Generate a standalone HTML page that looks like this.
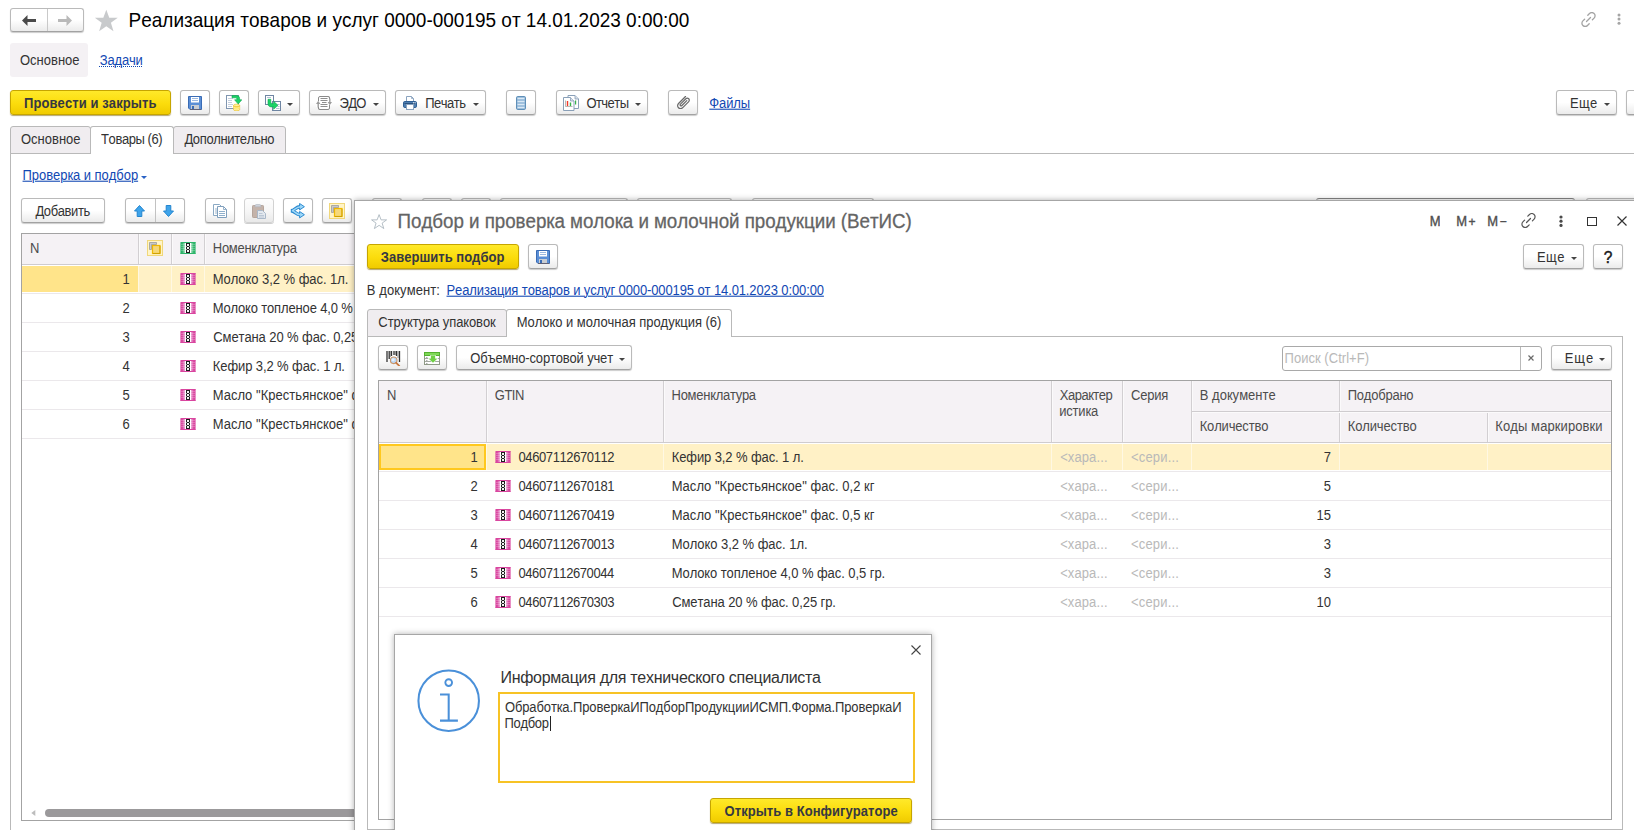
<!DOCTYPE html><html lang="ru"><head><meta charset="utf-8"><title>1C</title><style>

*{box-sizing:border-box;margin:0;padding:0}
html,body{width:1634px;height:830px;overflow:hidden;background:#fff}
body{font-family:"Liberation Sans",sans-serif;font-size:13px;color:#333;line-height:16px}
#root{position:relative;width:1634px;height:830px;overflow:hidden;background:#fff}
#root div,#root svg{position:absolute}
.t{white-space:nowrap;line-height:16px;height:16px;font-kerning:none;transform:scaleY(1.07);transform-origin:0 20%}
.btn{border:1px solid #bababa;border-bottom-color:#a2a2a2;border-radius:3px;background:linear-gradient(#fff 0%,#fff 50%,#ebebeb 100%);box-shadow:0 1px 1px rgba(0,0,0,0.2)}
.btn.dis{background:linear-gradient(#fdfdfd 0%,#f6f6f6 55%,#e9e9e9 100%);border-color:#d2d2d2;box-shadow:0 1px 0 #cfcfcf}
.ybtn{border:1px solid #c6a500;border-radius:3px;background:linear-gradient(#ffe92a 0%,#fbdc0c 55%,#f0cb00 100%);box-shadow:0 1px 1px rgba(120,95,0,0.55)}
.b{font-weight:bold}
.lnk{color:#1248b3;text-decoration:underline;text-underline-offset:1px;text-decoration-thickness:1px}
.hdr{background:#f5f2f5}
.hl{background:#cfcccf}
.vl{background:#d2cfd2}
.gray{color:#b9b9b9}
.r{text-align:right}

</style></head><body><div id="root">
<div class="btn" style="left:10px;top:8px;width:74px;height:24px;"><div style="left:36px;top:0;width:1px;height:22px;background:#c9c9c9"></div></div>
<svg style="left:22px;top:15px" width="14" height="11" viewBox="0 0 14 11" ><path d="M0 5.5L5.5 0v4h8.5v3H5.5v4z" fill="#4a4a4a"/></svg>
<svg style="left:58px;top:15px" width="14" height="11" viewBox="0 0 14 11" ><path d="M14 5.5L8.5 0v4H0v3h8.5v4z" fill="#b9b9b9"/></svg>
<svg style="left:94.2px;top:8.5px" width="24.6" height="23" viewBox="0 0 24 23" preserveAspectRatio="none"><path d="M12 0.8l2.900 8h8.300l-6.700 5 2.500 8.400L12 17.200 5 22.200l2.500-8.400-6.700-5h8.300z" fill="#c8cacc"/></svg>
<div class="t" style="left:128.54px;top:9px;letter-spacing:-0.011px;font-size:19px;line-height:22px;height:22px;color:#000">Реализация товаров и услуг 0000-000195 от 14.01.2023 0:00:00</div>
<svg style="left:1581px;top:12px" width="15" height="15" viewBox="0 0 15 15" >
<g fill="none" stroke="#a3a3a3" stroke-width="1.3" stroke-linecap="round">
<path d="M6.800 3.200l1.700-1.700a3.200 3.200 0 0 1 4.600 0a3.200 3.200 0 0 1 0 4.600l-1.700 1.700"/>
<path d="M8.200 11.800l-1.700 1.700a3.200 3.200 0 0 1-4.600 0a3.200 3.200 0 0 1 0-4.600l1.700-1.700"/>
<path d="M5.500 9.500l4-4"/>
</g></svg>
<svg style="left:1616.5px;top:13.4px" width="4" height="12" viewBox="0 0 4 12" ><circle cx="2" cy="2.0" r="1.5" fill="#a5a5a5"/><circle cx="2" cy="6.1" r="1.5" fill="#a5a5a5"/><circle cx="2" cy="10.2" r="1.5" fill="#a5a5a5"/></svg>
<div class="" style="left:10px;top:43px;width:78px;height:34px;background:#f4f1f4;border-radius:3px"></div>
<div class="t" style="left:20px;top:52px;">Основное</div>
<div class="t" style="left:99.77px;top:52px;letter-spacing:-0.181px;color:#1248b3">Задачи</div>
<div class="" style="left:99px;top:66px;width:43px;height:1px;border-top:1px dotted #1248b3"></div>
<div class="ybtn" style="left:10px;top:90px;width:161px;height:25px;"></div>
<div class="t b" style="left:24.03px;top:95px;letter-spacing:0.092px;color:#363841">Провести и закрыть</div>
<div class="btn" style="left:180px;top:90px;width:30px;height:25px;"></div>
<svg style="left:188px;top:96px" width="14" height="14" viewBox="0 0 14 14" >
<path d="M0.5 0.5h13v13H2L0.5 12z" fill="#5b8fd6" stroke="#3a6cb5"/>
<rect x="3" y="1" width="8" height="5.5" fill="#fff"/>
<path d="M4 2.5h6M4 4.5h6" stroke="#9db9e0" stroke-width="1"/>
<rect x="3" y="9" width="8" height="4" fill="#c9cdd2"/>
<rect x="4" y="10" width="2" height="3" fill="#3a6cb5"/>
<path d="M2 13.5h11" stroke="#7a5a4a" stroke-width="0.6"/></svg>
<div class="btn" style="left:219px;top:90px;width:30px;height:25px;"></div>
<svg style="left:226px;top:95px" width="16" height="16" viewBox="0 0 16 16" >
<rect x="0.5" y="0.5" width="12" height="13" fill="#fff" stroke="#7f95b0"/>
<path d="M2 3.5h5M2 5.5h4M2 7.5h4M2 9.5h5M2 11.5h4" stroke="#b4c2d4" stroke-width="0.8"/>
<path d="M6 0.6h4.6c2 0 3 1.2 3 3v1.2h2.2L12.2 9 8.6 4.8h2.2v-1c0-.7-.3-1-1-1H6z" fill="#1bd366" stroke="#0ca54d" stroke-width="0.6"/>
<path d="M7.5 10.3v4.2c0 .8 1.400 1.300 3.100 1.300s3.100-.5 3.100-1.300v-4.200" fill="#ffdf50" stroke="#e0b21a" stroke-width="0.500"/>
<ellipse cx="10.6" cy="10.3" rx="3.100" ry="1.200" fill="#fff0a0" stroke="#e0b21a" stroke-width="0.500"/>
<path d="M7.700 12.100c0 .7 1.300 1.100 2.900 1.100s2.900-.4 2.900-1.100M7.700 13.700c0 .7 1.300 1.100 2.900 1.100s2.900-.4 2.900-1.100" fill="none" stroke="#fff8cc" stroke-width="0.700"/></svg>
<div class="btn" style="left:258px;top:90px;width:42px;height:25px;"></div>
<svg style="left:265px;top:95px" width="16" height="16" viewBox="0 0 16 16" >
<rect x="0.5" y="0.5" width="8" height="9" fill="#fff" stroke="#6f86a3"/>
<path d="M2 2.5h4" stroke="#9fb2c8" stroke-width="0.8"/>
<rect x="7.5" y="6.5" width="8" height="9" fill="#fff" stroke="#6f86a3"/>
<path d="M12.5 9.500h2M12.500 11.500h2M11 13.500h3.500" stroke="#9fb2c8" stroke-width="0.8"/>
<path d="M3 4.300h2.800v3c0 .9.500 1.300 1.300 1.300h1.500V6.300l4.400 4-4.400 4v-2.400H6.400c-2.200 0-3.400-1.300-3.400-3.400z" fill="#1bd366" stroke="#0ca54d" stroke-width="0.600"/></svg>
<svg style="left:287px;top:103px" width="6" height="3" viewBox="0 0 6 3" ><path d="M0 0h6L3 3z" fill="#444"/></svg>
<div class="btn" style="left:309px;top:90px;width:77px;height:25px;"></div>
<svg style="left:316px;top:96px" width="16" height="14" viewBox="0 0 16 14" >
<rect x="2.5" y="0.5" width="11" height="13" rx="1.5" fill="#fff" stroke="#8a8a8a"/>
<path d="M4.500 2.500h7M4.500 4.500h7M6 6.500h4.500M4.500 8.500h7M4.500 10.500h7" stroke="#8f8f8f" stroke-width="1"/>
<rect x="0" y="5" width="4" height="6" fill="#fff"/><rect x="12" y="3" width="4" height="6" fill="#fff"/>
<path d="M2.200 4.800L0 8h1.500v3.500h1.400V8h1.500z" fill="#9c9c9c"/>
<path d="M13.800 9.200L11.600 6h1.500V2.500h1.400V6h1.500z" fill="#9c9c9c"/>
<path d="M2.500 11.500v1c0 .6.400 1 1 1M13.500 2.500v-1c0-.6-.4-1-1-1" fill="none" stroke="#8a8a8a"/></svg>
<div class="t" style="left:339.53px;top:95px;letter-spacing:-0.686px;">ЭДО</div>
<svg style="left:373px;top:103px" width="6" height="3" viewBox="0 0 6 3" ><path d="M0 0h6L3 3z" fill="#444"/></svg>
<div class="btn" style="left:395px;top:90px;width:91px;height:25px;"></div>
<svg style="left:403px;top:96px" width="14" height="14" viewBox="0 0 14 14" >
<path d="M3.5 5V0.5h5l2 2V5" fill="#fff" stroke="#8aa3bf"/>
<path d="M8.5 0.5v2h2" fill="none" stroke="#8aa3bf" stroke-width="0.8"/>
<rect x="0.5" y="5.5" width="13" height="6" rx="1.3" fill="#4f7fb0" stroke="#2f5f94"/>
<path d="M1.5 7.5h11" stroke="#2b527f" stroke-width="1"/>
<rect x="10" y="6.3" width="1" height="1" fill="#fff"/><rect x="11.6" y="6.3" width="1" height="1" fill="#fff"/>
<rect x="3.5" y="8.5" width="7" height="5" fill="#fff" stroke="#8aa3bf"/></svg>
<div class="t" style="left:425.15px;top:95px;letter-spacing:-0.463px;">Печать</div>
<svg style="left:473px;top:103px" width="6" height="3" viewBox="0 0 6 3" ><path d="M0 0h6L3 3z" fill="#444"/></svg>
<div class="btn" style="left:506px;top:90px;width:30px;height:25px;"></div>
<svg style="left:516px;top:96px" width="10" height="14" viewBox="0 0 10 14" >
<rect x="0.5" y="0.5" width="9" height="13" rx="1.2" fill="#8db4d6" stroke="#5f8fb8"/>
<path d="M1.5 2.5h7M1.5 5.5h7M1.5 8.5h7M1.5 11.5h7" stroke="#d9e8f5" stroke-width="1.4"/></svg>
<div class="btn" style="left:556px;top:90px;width:92px;height:25px;"></div>
<svg style="left:563px;top:95px" width="16" height="16" viewBox="0 0 16 16" >
<path d="M5 0.5h7l3.5 3.5v9.5H5z" fill="#fff" stroke="#8aa0b8"/>
<path d="M12 0.5V4h3.5" fill="#d7dfe8" stroke="#8aa0b8" stroke-width="0.8"/>
<rect x="12" y="5.5" width="1.2" height="4" fill="#37b34a"/>
<path d="M0.5 2.5h7l3.5 3.500v9.500H0.500z" fill="#fff" stroke="#8aa0b8"/>
<path d="M7.500 2.500V6h3.500" fill="#d7dfe8" stroke="#8aa0b8" stroke-width="0.8"/>
<path d="M2.500 5.500v6h7" fill="none" stroke="#9a9a9a" stroke-width="0.7"/>
<rect x="3.8" y="6" width="1.400" height="5" fill="#f03a2a"/>
<rect x="6.800" y="7.500" width="1.400" height="3.500" fill="#37b34a"/></svg>
<div class="t" style="left:586.38px;top:95px;letter-spacing:-0.55px;">Отчеты</div>
<svg style="left:635px;top:103px" width="6" height="3" viewBox="0 0 6 3" ><path d="M0 0h6L3 3z" fill="#444"/></svg>
<div class="btn" style="left:668px;top:90px;width:30px;height:25px;"></div>
<svg style="left:677px;top:96px" width="13" height="13" viewBox="0 0 13 13" >
<g fill="none" stroke="#6a6a6a" stroke-width="1.25" stroke-linecap="round">
<path d="M8.500 0.500L1.800 7.200c-1.500 1.500-1.500 3.300-.3 4.500s3 1.200 4.500-.3l5.500-5.500c1-1 1-2.300.2-3.100s-2.100-.8-3.100.2L3.500 8.100c-.5.500-.5 1.100-.1 1.500s1 .4 1.500-.1l4.900-4.900"/>
</g></svg>
<div class="t lnk" style="left:709.25px;top:95px;letter-spacing:-0.088px;">Файлы</div>
<div class="btn" style="left:1556px;top:90px;width:61px;height:25px;"></div>
<div class="t" style="left:1570.03px;top:95px;letter-spacing:0.274px;">Еще</div>
<svg style="left:1604px;top:103px" width="6" height="3" viewBox="0 0 6 3" ><path d="M0 0h6L3 3z" fill="#444"/></svg>
<div class="btn" style="left:1626px;top:90px;width:30px;height:25px;"></div>
<div class="" style="left:10px;top:153px;width:1640px;height:700px;border:1px solid #b9b9b9;background:#fff"></div>
<div class="" style="left:10px;top:126px;width:81px;height:28px;border:1px solid #b9b9b9;border-bottom:1px solid #b9b9b9;border-radius:3px 3px 0 0;background:#f0edf0"></div>
<div class="" style="left:173px;top:126px;width:113px;height:28px;border:1px solid #b9b9b9;border-radius:3px 3px 0 0;background:#f0edf0"></div>
<div class="" style="left:90px;top:126px;width:84px;height:28px;border:1px solid #b9b9b9;border-bottom:none;border-radius:3px 3px 0 0;background:#fff"></div>
<div class="t" style="left:21px;top:131px;">Основное</div>
<div class="t" style="left:101.11px;top:131px;letter-spacing:-0.431px;">Товары (6)</div>
<div class="t" style="left:184.4px;top:131px;letter-spacing:-0.353px;">Дополнительно</div>
<div class="t lnk" style="left:22.55px;top:167px;letter-spacing:-0.046px;">Проверка и подбор</div>
<svg style="left:141.3px;top:176px" width="6" height="3" viewBox="0 0 6 3" ><path d="M0 0h6L3 3z" fill="#2a62c5"/></svg>
<div class="btn" style="left:21px;top:198px;width:84px;height:25px;"></div>
<div class="t" style="left:35.4px;top:203px;letter-spacing:-0.382px;">Добавить</div>
<div class="btn" style="left:125px;top:198px;width:60px;height:25px;"><div style="left:29px;top:0;width:1px;height:23px;background:#c2c2c2"></div></div>
<svg style="left:134px;top:205px" width="11" height="12" viewBox="0 0 11 12" ><path d="M5.500 0.500L10.500 6H7.800v5.500H3.200V6H0.500z" fill="#3fa4ea" stroke="#2385cf" stroke-width="1" stroke-linejoin="round"/></svg>
<svg style="left:163px;top:205px" width="11" height="12" viewBox="0 0 11 12" ><path d="M5.500 11.500L10.500 6H7.800V0.500H3.200V6H0.500z" fill="#3fa4ea" stroke="#2385cf" stroke-width="1" stroke-linejoin="round"/></svg>
<div class="btn" style="left:205px;top:198px;width:30px;height:25px;"></div>
<svg style="left:213px;top:204px" width="14" height="14" viewBox="0 0 14 14" >
<path d="M0.500 0.500h6l2 2v9H0.500z" fill="#fff" stroke="#8aa9c4"/>
<path d="M2 5h2M2 7h2M2 9h2" stroke="#9fb7cc"/>
<path d="M4.500 2.500h6l3 3v8h-9z" fill="#fff" stroke="#7f9fbd"/>
<path d="M10.500 2.500v3h3" fill="none" stroke="#7f9fbd" stroke-width="0.8"/>
<path d="M6 7.500h6M6 9.500h6M6 11.500h6" stroke="#8fb0cc" stroke-width="1"/></svg>
<div class="btn dis" style="left:244px;top:198px;width:30px;height:25px;"></div>
<svg style="left:252px;top:204px" width="14" height="15" viewBox="0 0 14 15" >
<rect x="0.500" y="1.500" width="11" height="12" rx="0.800" fill="#c4b3aa" stroke="#b5a59c"/>
<path d="M3 1.800c0-1 1-1.500 3-1.500s3 .5 3 1.500v1H3z" fill="#cfd3da" stroke="#aeb4bd" stroke-width="0.600"/>
<path d="M5.500 6.500h5l3 3v5h-8z" fill="#e3e8ee" stroke="#a9b8c9"/>
<path d="M7 9.500h3.500M7 11.500h5M7 13h5" stroke="#b7c4d3" stroke-width="0.900"/></svg>
<div class="btn" style="left:283px;top:198px;width:30px;height:25px;"></div>
<svg style="left:290px;top:203px" width="15" height="16" viewBox="0 0 15 16" >
<path d="M10 3.700C5.500 3.700 5 7.700 0.800 7.700C5 7.700 5.500 11.700 10 11.700" fill="none" stroke="#2b8ad0" stroke-width="3.400" stroke-linejoin="miter"/>
<path d="M9.600 0.500l4.800 3.200-4.800 3.200zM9.600 8.500l4.800 3.200-4.800 3.200z" fill="#9fd8f8" stroke="#2b8ad0" stroke-width="1" stroke-linejoin="miter"/>
<path d="M10.500 3.700C5.500 3.700 5 7.700 1.800 7.700C5 7.700 5.500 11.700 10.500 11.700" fill="none" stroke="#9fd8f8" stroke-width="1.500"/></svg>
<div class="btn" style="left:322px;top:198px;width:30px;height:25px;"></div>
<svg style="left:329px;top:203px" width="16" height="16" viewBox="0 0 16 16" >
<rect x="0.500" y="0.500" width="15" height="15" fill="#fff4c8" stroke="#f0d77a"/>
<path d="M2.500 2.500h7v2h-5v5h-2z" fill="#c9c9c9" stroke="#9a9a9a" stroke-width="0.800"/>
<rect x="5.500" y="5.500" width="7.500" height="8" fill="#f6d878" stroke="#f0b800" stroke-width="1.200"/>
<path d="M13 6v7.500H6" fill="none" stroke="#c89a00" stroke-width="0.800"/></svg>
<div class="btn" style="left:372px;top:198px;width:30px;height:25px;"></div>
<div class="btn" style="left:422px;top:198px;width:30px;height:25px;"></div>
<div class="btn" style="left:461px;top:198px;width:30px;height:25px;"></div>
<div class="btn" style="left:500px;top:198px;width:128px;height:25px;"></div>
<div class="btn" style="left:637px;top:198px;width:95px;height:25px;"></div>
<div class="btn" style="left:752px;top:198px;width:122px;height:25px;"></div>
<div class="" style="left:1316px;top:198px;width:259px;height:25px;border:1px solid #a9a9a9;border-top-color:#858585;border-radius:3px;background:#fff"></div>
<div class="btn" style="left:1586px;top:198px;width:61px;height:25px;"></div>
<div class="" style="left:21px;top:233px;width:1620px;height:588px;border:1px solid #a3a3a3;background:#fff"></div>
<div class="hdr" style="left:22px;top:234px;width:1600px;height:30px;"></div>
<div class="hl" style="left:22px;top:264px;width:1600px;height:1px;"></div>
<div class="vl" style="left:138px;top:234px;width:1px;height:30px;"></div>
<div class="" style="left:139px;top:234px;width:1px;height:30px;background:#fbfafb"></div>
<div class="vl" style="left:171px;top:234px;width:1px;height:30px;"></div>
<div class="" style="left:172px;top:234px;width:1px;height:30px;background:#fbfafb"></div>
<div class="vl" style="left:204px;top:234px;width:1px;height:30px;"></div>
<div class="" style="left:205px;top:234px;width:1px;height:30px;background:#fbfafb"></div>
<div class="t" style="left:30px;top:240px;color:#4d4d4d">N</div>
<svg style="left:147px;top:240px" width="16" height="16" viewBox="0 0 16 16" >
<rect x="0.500" y="0.500" width="15" height="15" fill="#fff4c8" stroke="#f0d77a"/>
<path d="M2.500 2.500h7v2h-5v5h-2z" fill="#c9c9c9" stroke="#9a9a9a" stroke-width="0.800"/>
<rect x="5.500" y="5.500" width="7.500" height="8" fill="#f6d878" stroke="#f0b800" stroke-width="1.200"/>
<path d="M13 6v7.500H6" fill="none" stroke="#c89a00" stroke-width="0.800"/></svg>
<svg style="left:180px;top:242px" width="16" height="12" viewBox="0 0 16 12" >
<defs><linearGradient id="sg1" x1="0" x2="1" y1="0" y2="0"><stop offset="0" stop-color="#2db46a"/><stop offset="0.14" stop-color="#2db46a"/><stop offset="0.31" stop-color="#a9e2c2"/><stop offset="0.69" stop-color="#a9e2c2"/><stop offset="0.86" stop-color="#2db46a"/><stop offset="1" stop-color="#2db46a"/></linearGradient></defs>
<path d="M0.8 0L0.8 1L0 2L0.8 3L0 4L0.8 5L0 6L0.8 7L0 8L0.8 9L0 10L0.8 11L0 12L16 12L15.2 11L16 10L15.2 9L16 8L15.2 7L16 6L15.2 5L16 4L15.2 3L16 2L15.2 1L16 0z" fill="url(#sg1)"/>
<rect x="0.6" y="0" width="14.8" height="1" fill="#2db46a"/><rect x="0.6" y="11" width="14.8" height="1" fill="#2db46a"/>
<rect x="1" y="2" width="4" height="1" fill="#fff" opacity="0.22"/><rect x="11" y="2" width="4" height="1" fill="#fff" opacity="0.22"/><rect x="1" y="4" width="4" height="1" fill="#fff" opacity="0.22"/><rect x="11" y="4" width="4" height="1" fill="#fff" opacity="0.22"/><rect x="1" y="6" width="4" height="1" fill="#fff" opacity="0.22"/><rect x="11" y="6" width="4" height="1" fill="#fff" opacity="0.22"/><rect x="1" y="8" width="4" height="1" fill="#fff" opacity="0.22"/><rect x="11" y="8" width="4" height="1" fill="#fff" opacity="0.22"/><rect x="5" y="1" width="6" height="10" fill="#fff"/>
<rect x="6" y="1" width="4" height="10" fill="#1d1d1d"/><rect x="7" y="2" width="1" height="1" fill="#fff" opacity="0.95"/><rect x="8" y="2" width="1" height="1" fill="#fff" opacity="0.95"/><rect x="7" y="3" width="1" height="1" fill="#fff" opacity="0.95"/><rect x="8" y="3" width="1" height="1" fill="#fff" opacity="0.95"/><rect x="6" y="4" width="1" height="1" fill="#fff" opacity="0.55"/><rect x="9" y="4" width="1" height="1" fill="#fff" opacity="0.55"/><rect x="7" y="5" width="1" height="1" fill="#fff" opacity="0.95"/><rect x="8" y="5" width="1" height="1" fill="#fff" opacity="0.95"/><rect x="7" y="6" width="1" height="1" fill="#fff" opacity="0.95"/><rect x="8" y="6" width="1" height="1" fill="#fff" opacity="0.95"/><rect x="6" y="7" width="1" height="1" fill="#fff" opacity="0.55"/><rect x="9" y="7" width="1" height="1" fill="#fff" opacity="0.55"/><rect x="7" y="8" width="1" height="1" fill="#fff" opacity="0.95"/><rect x="8" y="8" width="1" height="1" fill="#fff" opacity="0.95"/><rect x="7" y="9" width="1" height="1" fill="#fff" opacity="0.95"/><rect x="8" y="9" width="1" height="1" fill="#fff" opacity="0.95"/></svg>
<div class="t" style="left:212.83px;top:240px;letter-spacing:-0.301px;color:#4d4d4d">Номенклатура</div>
<div class="" style="left:22px;top:266px;width:1600px;height:26px;background:#fff1c6"></div>
<div class="" style="left:22px;top:266px;width:116px;height:26px;background:#ffe48a"></div>
<div class="" style="left:138px;top:266px;width:1px;height:26px;background:#fff8e3"></div>
<div class="" style="left:171px;top:266px;width:1px;height:26px;background:#fff8e3"></div>
<div class="" style="left:204px;top:266px;width:1px;height:26px;background:#fff8e3"></div>
<div class="" style="left:22px;top:293px;width:1600px;height:1px;background:#ebe8eb"></div>
<div class="t r" style="left:99.7px;top:271px;width:30px">1</div>
<svg style="left:180px;top:273px" width="16" height="12" viewBox="0 0 16 12" >
<defs><linearGradient id="sg2" x1="0" x2="1" y1="0" y2="0"><stop offset="0" stop-color="#d9469f"/><stop offset="0.14" stop-color="#d9469f"/><stop offset="0.31" stop-color="#eda6d6"/><stop offset="0.69" stop-color="#eda6d6"/><stop offset="0.86" stop-color="#d9469f"/><stop offset="1" stop-color="#d9469f"/></linearGradient></defs>
<path d="M0.8 0L0.8 1L0 2L0.8 3L0 4L0.8 5L0 6L0.8 7L0 8L0.8 9L0 10L0.8 11L0 12L16 12L15.2 11L16 10L15.2 9L16 8L15.2 7L16 6L15.2 5L16 4L15.2 3L16 2L15.2 1L16 0z" fill="url(#sg2)"/>
<rect x="0.6" y="0" width="14.8" height="1" fill="#d9469f"/><rect x="0.6" y="11" width="14.8" height="1" fill="#d9469f"/>
<rect x="1" y="2" width="4" height="1" fill="#fff" opacity="0.22"/><rect x="11" y="2" width="4" height="1" fill="#fff" opacity="0.22"/><rect x="1" y="4" width="4" height="1" fill="#fff" opacity="0.22"/><rect x="11" y="4" width="4" height="1" fill="#fff" opacity="0.22"/><rect x="1" y="6" width="4" height="1" fill="#fff" opacity="0.22"/><rect x="11" y="6" width="4" height="1" fill="#fff" opacity="0.22"/><rect x="1" y="8" width="4" height="1" fill="#fff" opacity="0.22"/><rect x="11" y="8" width="4" height="1" fill="#fff" opacity="0.22"/><rect x="5" y="1" width="6" height="10" fill="#fff"/>
<rect x="6" y="1" width="4" height="10" fill="#1d1d1d"/><rect x="7" y="2" width="1" height="1" fill="#fff" opacity="0.95"/><rect x="8" y="2" width="1" height="1" fill="#fff" opacity="0.95"/><rect x="7" y="3" width="1" height="1" fill="#fff" opacity="0.95"/><rect x="8" y="3" width="1" height="1" fill="#fff" opacity="0.95"/><rect x="6" y="4" width="1" height="1" fill="#fff" opacity="0.55"/><rect x="9" y="4" width="1" height="1" fill="#fff" opacity="0.55"/><rect x="7" y="5" width="1" height="1" fill="#fff" opacity="0.95"/><rect x="8" y="5" width="1" height="1" fill="#fff" opacity="0.95"/><rect x="7" y="6" width="1" height="1" fill="#fff" opacity="0.95"/><rect x="8" y="6" width="1" height="1" fill="#fff" opacity="0.95"/><rect x="6" y="7" width="1" height="1" fill="#fff" opacity="0.55"/><rect x="9" y="7" width="1" height="1" fill="#fff" opacity="0.55"/><rect x="7" y="8" width="1" height="1" fill="#fff" opacity="0.95"/><rect x="8" y="8" width="1" height="1" fill="#fff" opacity="0.95"/><rect x="7" y="9" width="1" height="1" fill="#fff" opacity="0.95"/><rect x="8" y="9" width="1" height="1" fill="#fff" opacity="0.95"/></svg>
<div class="t" style="left:212.83px;top:271px;letter-spacing:-0.034px;">Молоко 3,2 % фас. 1л.</div>
<div class="" style="left:22px;top:322px;width:1600px;height:1px;background:#ebe8eb"></div>
<div class="t r" style="left:99.7px;top:300px;width:30px">2</div>
<svg style="left:180px;top:302px" width="16" height="12" viewBox="0 0 16 12" >
<defs><linearGradient id="sg3" x1="0" x2="1" y1="0" y2="0"><stop offset="0" stop-color="#d9469f"/><stop offset="0.14" stop-color="#d9469f"/><stop offset="0.31" stop-color="#eda6d6"/><stop offset="0.69" stop-color="#eda6d6"/><stop offset="0.86" stop-color="#d9469f"/><stop offset="1" stop-color="#d9469f"/></linearGradient></defs>
<path d="M0.8 0L0.8 1L0 2L0.8 3L0 4L0.8 5L0 6L0.8 7L0 8L0.8 9L0 10L0.8 11L0 12L16 12L15.2 11L16 10L15.2 9L16 8L15.2 7L16 6L15.2 5L16 4L15.2 3L16 2L15.2 1L16 0z" fill="url(#sg3)"/>
<rect x="0.6" y="0" width="14.8" height="1" fill="#d9469f"/><rect x="0.6" y="11" width="14.8" height="1" fill="#d9469f"/>
<rect x="1" y="2" width="4" height="1" fill="#fff" opacity="0.22"/><rect x="11" y="2" width="4" height="1" fill="#fff" opacity="0.22"/><rect x="1" y="4" width="4" height="1" fill="#fff" opacity="0.22"/><rect x="11" y="4" width="4" height="1" fill="#fff" opacity="0.22"/><rect x="1" y="6" width="4" height="1" fill="#fff" opacity="0.22"/><rect x="11" y="6" width="4" height="1" fill="#fff" opacity="0.22"/><rect x="1" y="8" width="4" height="1" fill="#fff" opacity="0.22"/><rect x="11" y="8" width="4" height="1" fill="#fff" opacity="0.22"/><rect x="5" y="1" width="6" height="10" fill="#fff"/>
<rect x="6" y="1" width="4" height="10" fill="#1d1d1d"/><rect x="7" y="2" width="1" height="1" fill="#fff" opacity="0.95"/><rect x="8" y="2" width="1" height="1" fill="#fff" opacity="0.95"/><rect x="7" y="3" width="1" height="1" fill="#fff" opacity="0.95"/><rect x="8" y="3" width="1" height="1" fill="#fff" opacity="0.95"/><rect x="6" y="4" width="1" height="1" fill="#fff" opacity="0.55"/><rect x="9" y="4" width="1" height="1" fill="#fff" opacity="0.55"/><rect x="7" y="5" width="1" height="1" fill="#fff" opacity="0.95"/><rect x="8" y="5" width="1" height="1" fill="#fff" opacity="0.95"/><rect x="7" y="6" width="1" height="1" fill="#fff" opacity="0.95"/><rect x="8" y="6" width="1" height="1" fill="#fff" opacity="0.95"/><rect x="6" y="7" width="1" height="1" fill="#fff" opacity="0.55"/><rect x="9" y="7" width="1" height="1" fill="#fff" opacity="0.55"/><rect x="7" y="8" width="1" height="1" fill="#fff" opacity="0.95"/><rect x="8" y="8" width="1" height="1" fill="#fff" opacity="0.95"/><rect x="7" y="9" width="1" height="1" fill="#fff" opacity="0.95"/><rect x="8" y="9" width="1" height="1" fill="#fff" opacity="0.95"/></svg>
<div class="t" style="left:212.83px;top:300px;letter-spacing:-0.145px;">Молоко топленое 4,0 % фас. 0,5 гр.</div>
<div class="" style="left:22px;top:351px;width:1600px;height:1px;background:#ebe8eb"></div>
<div class="t r" style="left:99.7px;top:329px;width:30px">3</div>
<svg style="left:180px;top:331px" width="16" height="12" viewBox="0 0 16 12" >
<defs><linearGradient id="sg4" x1="0" x2="1" y1="0" y2="0"><stop offset="0" stop-color="#d9469f"/><stop offset="0.14" stop-color="#d9469f"/><stop offset="0.31" stop-color="#eda6d6"/><stop offset="0.69" stop-color="#eda6d6"/><stop offset="0.86" stop-color="#d9469f"/><stop offset="1" stop-color="#d9469f"/></linearGradient></defs>
<path d="M0.8 0L0.8 1L0 2L0.8 3L0 4L0.8 5L0 6L0.8 7L0 8L0.8 9L0 10L0.8 11L0 12L16 12L15.2 11L16 10L15.2 9L16 8L15.2 7L16 6L15.2 5L16 4L15.2 3L16 2L15.2 1L16 0z" fill="url(#sg4)"/>
<rect x="0.6" y="0" width="14.8" height="1" fill="#d9469f"/><rect x="0.6" y="11" width="14.8" height="1" fill="#d9469f"/>
<rect x="1" y="2" width="4" height="1" fill="#fff" opacity="0.22"/><rect x="11" y="2" width="4" height="1" fill="#fff" opacity="0.22"/><rect x="1" y="4" width="4" height="1" fill="#fff" opacity="0.22"/><rect x="11" y="4" width="4" height="1" fill="#fff" opacity="0.22"/><rect x="1" y="6" width="4" height="1" fill="#fff" opacity="0.22"/><rect x="11" y="6" width="4" height="1" fill="#fff" opacity="0.22"/><rect x="1" y="8" width="4" height="1" fill="#fff" opacity="0.22"/><rect x="11" y="8" width="4" height="1" fill="#fff" opacity="0.22"/><rect x="5" y="1" width="6" height="10" fill="#fff"/>
<rect x="6" y="1" width="4" height="10" fill="#1d1d1d"/><rect x="7" y="2" width="1" height="1" fill="#fff" opacity="0.95"/><rect x="8" y="2" width="1" height="1" fill="#fff" opacity="0.95"/><rect x="7" y="3" width="1" height="1" fill="#fff" opacity="0.95"/><rect x="8" y="3" width="1" height="1" fill="#fff" opacity="0.95"/><rect x="6" y="4" width="1" height="1" fill="#fff" opacity="0.55"/><rect x="9" y="4" width="1" height="1" fill="#fff" opacity="0.55"/><rect x="7" y="5" width="1" height="1" fill="#fff" opacity="0.95"/><rect x="8" y="5" width="1" height="1" fill="#fff" opacity="0.95"/><rect x="7" y="6" width="1" height="1" fill="#fff" opacity="0.95"/><rect x="8" y="6" width="1" height="1" fill="#fff" opacity="0.95"/><rect x="6" y="7" width="1" height="1" fill="#fff" opacity="0.55"/><rect x="9" y="7" width="1" height="1" fill="#fff" opacity="0.55"/><rect x="7" y="8" width="1" height="1" fill="#fff" opacity="0.95"/><rect x="8" y="8" width="1" height="1" fill="#fff" opacity="0.95"/><rect x="7" y="9" width="1" height="1" fill="#fff" opacity="0.95"/><rect x="8" y="9" width="1" height="1" fill="#fff" opacity="0.95"/></svg>
<div class="t" style="left:213.24px;top:329px;letter-spacing:-0.092px;">Сметана 20 % фас. 0,25 гр.</div>
<div class="" style="left:22px;top:380px;width:1600px;height:1px;background:#ebe8eb"></div>
<div class="t r" style="left:99.7px;top:358px;width:30px">4</div>
<svg style="left:180px;top:360px" width="16" height="12" viewBox="0 0 16 12" >
<defs><linearGradient id="sg5" x1="0" x2="1" y1="0" y2="0"><stop offset="0" stop-color="#d9469f"/><stop offset="0.14" stop-color="#d9469f"/><stop offset="0.31" stop-color="#eda6d6"/><stop offset="0.69" stop-color="#eda6d6"/><stop offset="0.86" stop-color="#d9469f"/><stop offset="1" stop-color="#d9469f"/></linearGradient></defs>
<path d="M0.8 0L0.8 1L0 2L0.8 3L0 4L0.8 5L0 6L0.8 7L0 8L0.8 9L0 10L0.8 11L0 12L16 12L15.2 11L16 10L15.2 9L16 8L15.2 7L16 6L15.2 5L16 4L15.2 3L16 2L15.2 1L16 0z" fill="url(#sg5)"/>
<rect x="0.6" y="0" width="14.8" height="1" fill="#d9469f"/><rect x="0.6" y="11" width="14.8" height="1" fill="#d9469f"/>
<rect x="1" y="2" width="4" height="1" fill="#fff" opacity="0.22"/><rect x="11" y="2" width="4" height="1" fill="#fff" opacity="0.22"/><rect x="1" y="4" width="4" height="1" fill="#fff" opacity="0.22"/><rect x="11" y="4" width="4" height="1" fill="#fff" opacity="0.22"/><rect x="1" y="6" width="4" height="1" fill="#fff" opacity="0.22"/><rect x="11" y="6" width="4" height="1" fill="#fff" opacity="0.22"/><rect x="1" y="8" width="4" height="1" fill="#fff" opacity="0.22"/><rect x="11" y="8" width="4" height="1" fill="#fff" opacity="0.22"/><rect x="5" y="1" width="6" height="10" fill="#fff"/>
<rect x="6" y="1" width="4" height="10" fill="#1d1d1d"/><rect x="7" y="2" width="1" height="1" fill="#fff" opacity="0.95"/><rect x="8" y="2" width="1" height="1" fill="#fff" opacity="0.95"/><rect x="7" y="3" width="1" height="1" fill="#fff" opacity="0.95"/><rect x="8" y="3" width="1" height="1" fill="#fff" opacity="0.95"/><rect x="6" y="4" width="1" height="1" fill="#fff" opacity="0.55"/><rect x="9" y="4" width="1" height="1" fill="#fff" opacity="0.55"/><rect x="7" y="5" width="1" height="1" fill="#fff" opacity="0.95"/><rect x="8" y="5" width="1" height="1" fill="#fff" opacity="0.95"/><rect x="7" y="6" width="1" height="1" fill="#fff" opacity="0.95"/><rect x="8" y="6" width="1" height="1" fill="#fff" opacity="0.95"/><rect x="6" y="7" width="1" height="1" fill="#fff" opacity="0.55"/><rect x="9" y="7" width="1" height="1" fill="#fff" opacity="0.55"/><rect x="7" y="8" width="1" height="1" fill="#fff" opacity="0.95"/><rect x="8" y="8" width="1" height="1" fill="#fff" opacity="0.95"/><rect x="7" y="9" width="1" height="1" fill="#fff" opacity="0.95"/><rect x="8" y="9" width="1" height="1" fill="#fff" opacity="0.95"/></svg>
<div class="t" style="left:212.83px;top:358px;letter-spacing:-0.1px;">Кефир 3,2 % фас. 1 л.</div>
<div class="" style="left:22px;top:409px;width:1600px;height:1px;background:#ebe8eb"></div>
<div class="t r" style="left:99.7px;top:387px;width:30px">5</div>
<svg style="left:180px;top:389px" width="16" height="12" viewBox="0 0 16 12" >
<defs><linearGradient id="sg6" x1="0" x2="1" y1="0" y2="0"><stop offset="0" stop-color="#d9469f"/><stop offset="0.14" stop-color="#d9469f"/><stop offset="0.31" stop-color="#eda6d6"/><stop offset="0.69" stop-color="#eda6d6"/><stop offset="0.86" stop-color="#d9469f"/><stop offset="1" stop-color="#d9469f"/></linearGradient></defs>
<path d="M0.8 0L0.8 1L0 2L0.8 3L0 4L0.8 5L0 6L0.8 7L0 8L0.8 9L0 10L0.8 11L0 12L16 12L15.2 11L16 10L15.2 9L16 8L15.2 7L16 6L15.2 5L16 4L15.2 3L16 2L15.2 1L16 0z" fill="url(#sg6)"/>
<rect x="0.6" y="0" width="14.8" height="1" fill="#d9469f"/><rect x="0.6" y="11" width="14.8" height="1" fill="#d9469f"/>
<rect x="1" y="2" width="4" height="1" fill="#fff" opacity="0.22"/><rect x="11" y="2" width="4" height="1" fill="#fff" opacity="0.22"/><rect x="1" y="4" width="4" height="1" fill="#fff" opacity="0.22"/><rect x="11" y="4" width="4" height="1" fill="#fff" opacity="0.22"/><rect x="1" y="6" width="4" height="1" fill="#fff" opacity="0.22"/><rect x="11" y="6" width="4" height="1" fill="#fff" opacity="0.22"/><rect x="1" y="8" width="4" height="1" fill="#fff" opacity="0.22"/><rect x="11" y="8" width="4" height="1" fill="#fff" opacity="0.22"/><rect x="5" y="1" width="6" height="10" fill="#fff"/>
<rect x="6" y="1" width="4" height="10" fill="#1d1d1d"/><rect x="7" y="2" width="1" height="1" fill="#fff" opacity="0.95"/><rect x="8" y="2" width="1" height="1" fill="#fff" opacity="0.95"/><rect x="7" y="3" width="1" height="1" fill="#fff" opacity="0.95"/><rect x="8" y="3" width="1" height="1" fill="#fff" opacity="0.95"/><rect x="6" y="4" width="1" height="1" fill="#fff" opacity="0.55"/><rect x="9" y="4" width="1" height="1" fill="#fff" opacity="0.55"/><rect x="7" y="5" width="1" height="1" fill="#fff" opacity="0.95"/><rect x="8" y="5" width="1" height="1" fill="#fff" opacity="0.95"/><rect x="7" y="6" width="1" height="1" fill="#fff" opacity="0.95"/><rect x="8" y="6" width="1" height="1" fill="#fff" opacity="0.95"/><rect x="6" y="7" width="1" height="1" fill="#fff" opacity="0.55"/><rect x="9" y="7" width="1" height="1" fill="#fff" opacity="0.55"/><rect x="7" y="8" width="1" height="1" fill="#fff" opacity="0.95"/><rect x="8" y="8" width="1" height="1" fill="#fff" opacity="0.95"/><rect x="7" y="9" width="1" height="1" fill="#fff" opacity="0.95"/><rect x="8" y="9" width="1" height="1" fill="#fff" opacity="0.95"/></svg>
<div class="t" style="left:212.83px;top:387px;letter-spacing:0.036px;">Масло "Крестьянское" фас. 0,2 кг</div>
<div class="" style="left:22px;top:438px;width:1600px;height:1px;background:#ebe8eb"></div>
<div class="t r" style="left:99.7px;top:416px;width:30px">6</div>
<svg style="left:180px;top:418px" width="16" height="12" viewBox="0 0 16 12" >
<defs><linearGradient id="sg7" x1="0" x2="1" y1="0" y2="0"><stop offset="0" stop-color="#d9469f"/><stop offset="0.14" stop-color="#d9469f"/><stop offset="0.31" stop-color="#eda6d6"/><stop offset="0.69" stop-color="#eda6d6"/><stop offset="0.86" stop-color="#d9469f"/><stop offset="1" stop-color="#d9469f"/></linearGradient></defs>
<path d="M0.8 0L0.8 1L0 2L0.8 3L0 4L0.8 5L0 6L0.8 7L0 8L0.8 9L0 10L0.8 11L0 12L16 12L15.2 11L16 10L15.2 9L16 8L15.2 7L16 6L15.2 5L16 4L15.2 3L16 2L15.2 1L16 0z" fill="url(#sg7)"/>
<rect x="0.6" y="0" width="14.8" height="1" fill="#d9469f"/><rect x="0.6" y="11" width="14.8" height="1" fill="#d9469f"/>
<rect x="1" y="2" width="4" height="1" fill="#fff" opacity="0.22"/><rect x="11" y="2" width="4" height="1" fill="#fff" opacity="0.22"/><rect x="1" y="4" width="4" height="1" fill="#fff" opacity="0.22"/><rect x="11" y="4" width="4" height="1" fill="#fff" opacity="0.22"/><rect x="1" y="6" width="4" height="1" fill="#fff" opacity="0.22"/><rect x="11" y="6" width="4" height="1" fill="#fff" opacity="0.22"/><rect x="1" y="8" width="4" height="1" fill="#fff" opacity="0.22"/><rect x="11" y="8" width="4" height="1" fill="#fff" opacity="0.22"/><rect x="5" y="1" width="6" height="10" fill="#fff"/>
<rect x="6" y="1" width="4" height="10" fill="#1d1d1d"/><rect x="7" y="2" width="1" height="1" fill="#fff" opacity="0.95"/><rect x="8" y="2" width="1" height="1" fill="#fff" opacity="0.95"/><rect x="7" y="3" width="1" height="1" fill="#fff" opacity="0.95"/><rect x="8" y="3" width="1" height="1" fill="#fff" opacity="0.95"/><rect x="6" y="4" width="1" height="1" fill="#fff" opacity="0.55"/><rect x="9" y="4" width="1" height="1" fill="#fff" opacity="0.55"/><rect x="7" y="5" width="1" height="1" fill="#fff" opacity="0.95"/><rect x="8" y="5" width="1" height="1" fill="#fff" opacity="0.95"/><rect x="7" y="6" width="1" height="1" fill="#fff" opacity="0.95"/><rect x="8" y="6" width="1" height="1" fill="#fff" opacity="0.95"/><rect x="6" y="7" width="1" height="1" fill="#fff" opacity="0.55"/><rect x="9" y="7" width="1" height="1" fill="#fff" opacity="0.55"/><rect x="7" y="8" width="1" height="1" fill="#fff" opacity="0.95"/><rect x="8" y="8" width="1" height="1" fill="#fff" opacity="0.95"/><rect x="7" y="9" width="1" height="1" fill="#fff" opacity="0.95"/><rect x="8" y="9" width="1" height="1" fill="#fff" opacity="0.95"/></svg>
<div class="t" style="left:212.83px;top:416px;letter-spacing:0.036px;">Масло "Крестьянское" фас. 0,5 кг</div>
<svg style="left:31px;top:810px" width="5" height="6" viewBox="0 0 5 6" ><path d="M4.300 0L0.300 3 4.300 6z" fill="#bdbdbd"/></svg>
<div class="" style="left:45px;top:809px;width:400px;height:8px;background:#9b999b;border-radius:4px"></div>
<div class="" style="left:354px;top:200px;width:1300px;height:700px;background:#fff;border:1px solid #a6a6a6;box-shadow:0 0 6px rgba(0,0,0,0.32)"></div>
<svg style="left:369.9px;top:212.9px" width="18.2" height="16.8" viewBox="0 0 24 23" preserveAspectRatio="none"><path d="M12 2.200l2.600 7.200h7.300l-5.900 4.500 2.200 7.400L12 16.900l-6.200 4.400 2.200-7.400-5.900-4.500h7.300z" fill="#fff" stroke="#a9b4bc" stroke-width="1.150" stroke-linejoin="miter"/></svg>
<div class="t" style="left:397.58px;top:210px;letter-spacing:-0.045px;font-size:18.8px;line-height:22px;height:22px;color:#646464;-webkit-text-stroke:0.25px #646464">Подбор и проверка молока и молочной продукции (ВетИС)</div>
<div class="t" style="left:1429.73px;top:213px;letter-spacing:-0.596px;color:#505050;-webkit-text-stroke:0.35px #505050">M</div>
<div class="t" style="left:1456.13px;top:213px;letter-spacing:-0.496px;color:#505050;-webkit-text-stroke:0.35px #505050">M</div>
<div class="t" style="left:1468.61px;top:213px;letter-spacing:-0.23px;color:#505050;-webkit-text-stroke:0.35px #505050;font-size:12px">+</div>
<div class="t" style="left:1487.13px;top:213px;letter-spacing:-0.496px;color:#505050;-webkit-text-stroke:0.35px #505050">M</div>
<div class="t" style="left:1499.81px;top:213px;letter-spacing:-1.23px;color:#505050;-webkit-text-stroke:0.35px #505050;font-size:12px">−</div>
<svg style="left:1521px;top:213px" width="15" height="15" viewBox="0 0 15 15" >
<g fill="none" stroke="#555" stroke-width="1.2" stroke-linecap="round">
<path d="M6.800 3.200l1.700-1.700a3.200 3.200 0 0 1 4.600 0a3.200 3.200 0 0 1 0 4.600l-1.700 1.700"/>
<path d="M8.200 11.800l-1.700 1.700a3.200 3.200 0 0 1-4.600 0a3.200 3.200 0 0 1 0-4.600l1.700-1.700"/>
<path d="M5.500 9.500l4-4"/>
</g></svg>
<svg style="left:1558.5px;top:215.2px" width="4" height="12" viewBox="0 0 4 12" ><circle cx="2" cy="2.0" r="1.6" fill="#4a4a4a"/><circle cx="2" cy="6.2" r="1.6" fill="#4a4a4a"/><circle cx="2" cy="10.4" r="1.6" fill="#4a4a4a"/></svg>
<div class="" style="left:1587px;top:217px;width:9.5px;height:9px;border:1.4px solid #333"></div>
<svg style="left:1617px;top:216px" width="10" height="10" viewBox="0 0 10 10" ><path d="M0.500 0.500l9 9M9.5 0.500l-9 9" stroke="#333" stroke-width="1.2" fill="none"/></svg>
<div class="ybtn" style="left:367px;top:244px;width:152px;height:25px;"></div>
<div class="t b" style="left:380.81px;top:249px;letter-spacing:0.016px;color:#363841">Завершить подбор</div>
<div class="btn" style="left:528px;top:244px;width:30px;height:25px;"></div>
<svg style="left:536px;top:250px" width="14" height="14" viewBox="0 0 14 14" >
<path d="M0.5 0.5h13v13H2L0.5 12z" fill="#5b8fd6" stroke="#3a6cb5"/>
<rect x="3" y="1" width="8" height="5.5" fill="#fff"/>
<path d="M4 2.5h6M4 4.5h6" stroke="#9db9e0" stroke-width="1"/>
<rect x="3" y="9" width="8" height="4" fill="#c9cdd2"/>
<rect x="4" y="10" width="2" height="3" fill="#3a6cb5"/>
<path d="M2 13.5h11" stroke="#7a5a4a" stroke-width="0.6"/></svg>
<div class="btn" style="left:1523px;top:244px;width:61px;height:25px;"></div>
<div class="t" style="left:1536.93px;top:249px;letter-spacing:0.474px;">Еще</div>
<svg style="left:1571px;top:257px" width="6" height="3" viewBox="0 0 6 3" ><path d="M0 0h6L3 3z" fill="#444"/></svg>
<div class="btn" style="left:1593px;top:244px;width:30px;height:25px;"></div>
<div class="t" style="left:1593px;top:249px;width:30px;text-align:center;font-size:15.5px;color:#1a1a1a;-webkit-text-stroke:0.45px #1a1a1a">?</div>
<div class="t" style="left:366.73px;top:282px;letter-spacing:0.106px;">В документ:</div>
<div class="t lnk" style="left:446.53px;top:282px;letter-spacing:-0.114px;">Реализация товаров и услуг 0000-000195 от 14.01.2023 0:00:00</div>
<div class="" style="left:367px;top:336px;width:1256px;height:494px;border:1px solid #b9b9b9;background:#fff"></div>
<div class="" style="left:367px;top:309px;width:140px;height:28px;border:1px solid #b9b9b9;border-radius:3px 3px 0 0;background:#f0edf0"></div>
<div class="" style="left:506px;top:309px;width:226px;height:28px;border:1px solid #b9b9b9;border-bottom:none;border-radius:3px 3px 0 0;background:#fff"></div>
<div class="t" style="left:378.34px;top:314px;letter-spacing:-0.082px;">Структура упаковок</div>
<div class="t" style="left:516.83px;top:314px;letter-spacing:-0.038px;">Молоко и молочная продукция (6)</div>
<div class="btn" style="left:378px;top:345px;width:30px;height:25px;"></div>
<svg style="left:386px;top:351px" width="15" height="15" viewBox="0 0 15 15" >
<path d="M1 0v11M3.200 0v8M5.500 0v5M8 0v4M10.500 0v5M13.500 0v11" stroke="#333" stroke-width="1.300"/>
<path d="M4.200 0v6M9.300 0v4M12 0v7" stroke="#555" stroke-width="0.700"/>
<circle cx="7.700" cy="9.300" r="3.300" fill="#bcd8f5" stroke="#c9966b" stroke-width="1.100"/>
<circle cx="7.200" cy="8.700" r="1.500" fill="#e6f1fd"/>
<path d="M10.200 11.800l3 3" stroke="#c9783f" stroke-width="1.800" stroke-linecap="round"/></svg>
<div class="btn" style="left:417px;top:345px;width:30px;height:25px;"></div>
<svg style="left:424px;top:352px" width="16" height="13" viewBox="0 0 16 13" >
<rect x="0.500" y="0.500" width="15" height="12" fill="#fff" stroke="#8f9a86"/>
<rect x="0.500" y="0.500" width="15" height="3" fill="#7ed957" stroke="#55b030"/>
<path d="M1 6.500h14M1 9.500h14" stroke="#9a9f96" stroke-width="0.900"/>
<path d="M2 5.500h1.500M2 8.500h1.500M2 11.500h1.500" stroke="#8a8a8a" stroke-width="0.700"/>
<path d="M6.500 3.500h5v3h2.300L9 11 4.200 6.500h2.300z" fill="#7ed957" stroke="#fff" stroke-width="0.700"/>
<path d="M7 3.500h4v3.300h2L9 10.500 5 6.800h2z" fill="#6fcf46"/></svg>
<div class="btn" style="left:456px;top:345px;width:176px;height:25px;"></div>
<div class="t" style="left:470.28px;top:350px;letter-spacing:-0.168px;">Объемно-сортовой учет</div>
<svg style="left:619px;top:358px" width="6" height="3" viewBox="0 0 6 3" ><path d="M0 0h6L3 3z" fill="#444"/></svg>
<div class="" style="left:1282px;top:346px;width:260px;height:25px;border:1px solid #a9a9a9;border-radius:3px;background:#fff"></div>
<div class="" style="left:1520px;top:347px;width:1px;height:23px;background:#b9b9b9"></div>
<div class="t" style="left:1284.55px;top:350px;letter-spacing:0.032px;color:#b9b9b9">Поиск (Ctrl+F)</div>
<svg style="left:1527.5px;top:354.5px" width="6" height="6" viewBox="0 0 6 6" ><path d="M0.500 0.500l5 5M5.5 0.500l-5 5" stroke="#6a6a6a" stroke-width="1.2" fill="none"/></svg>
<div class="btn" style="left:1551px;top:345px;width:61px;height:25px;"></div>
<div class="t" style="left:1564.73px;top:350px;letter-spacing:0.924px;">Еще</div>
<svg style="left:1599px;top:358px" width="6" height="3" viewBox="0 0 6 3" ><path d="M0 0h6L3 3z" fill="#444"/></svg>
<div class="" style="left:378px;top:380px;width:1234px;height:440px;border:1px solid #a3a3a3;background:#fff"></div>
<div class="hdr" style="left:379px;top:381px;width:1232px;height:61px;"></div>
<div class="hl" style="left:379px;top:442px;width:1232px;height:1px;"></div>
<div class="vl" style="left:486px;top:381px;width:1px;height:61px;"></div>
<div class="" style="left:487px;top:381px;width:1px;height:61px;background:#fbfafb"></div>
<div class="vl" style="left:663px;top:381px;width:1px;height:61px;"></div>
<div class="" style="left:664px;top:381px;width:1px;height:61px;background:#fbfafb"></div>
<div class="vl" style="left:1051px;top:381px;width:1px;height:61px;"></div>
<div class="" style="left:1052px;top:381px;width:1px;height:61px;background:#fbfafb"></div>
<div class="vl" style="left:1122px;top:381px;width:1px;height:61px;"></div>
<div class="" style="left:1123px;top:381px;width:1px;height:61px;background:#fbfafb"></div>
<div class="vl" style="left:1191px;top:381px;width:1px;height:61px;"></div>
<div class="" style="left:1192px;top:381px;width:1px;height:61px;background:#fbfafb"></div>
<div class="vl" style="left:1339px;top:381px;width:1px;height:61px;"></div>
<div class="" style="left:1340px;top:381px;width:1px;height:61px;background:#fbfafb"></div>
<div class="vl" style="left:1487px;top:412px;width:1px;height:30px;"></div>
<div class="" style="left:1488px;top:412px;width:1px;height:30px;background:#fbfafb"></div>
<div class="hl" style="left:1192px;top:411px;width:419px;height:1px;"></div>
<div class="" style="left:1192px;top:412px;width:419px;height:1px;background:#fbfafb"></div>
<div class="t" style="left:387px;top:387px;color:#4d4d4d">N</div>
<div class="t" style="left:494.75px;top:387px;letter-spacing:-0.48px;color:#4d4d4d">GTIN</div>
<div class="t" style="left:671.53px;top:387px;letter-spacing:-0.256px;color:#4d4d4d">Номенклатура</div>
<div class="t" style="left:1059.81px;top:387px;letter-spacing:-0.504px;color:#4d4d4d">Характер</div>
<div class="t" style="left:1059.2px;top:403px;letter-spacing:-0.179px;color:#4d4d4d">истика</div>
<div class="t" style="left:1131.04px;top:387px;letter-spacing:-0.247px;color:#4d4d4d">Серия</div>
<div class="t" style="left:1199.73px;top:387px;letter-spacing:0.023px;color:#4d4d4d">В документе</div>
<div class="t" style="left:1347.75px;top:387px;letter-spacing:-0.238px;color:#4d4d4d">Подобрано</div>
<div class="t" style="left:1199.73px;top:418px;letter-spacing:-0.17px;color:#4d4d4d">Количество</div>
<div class="t" style="left:1347.73px;top:418px;letter-spacing:-0.126px;color:#4d4d4d">Количество</div>
<div class="t" style="left:1495.33px;top:418px;letter-spacing:0.09px;color:#4d4d4d">Коды маркировки</div>
<div class="" style="left:379px;top:444px;width:1232px;height:26px;background:#fff1c6"></div>
<div class="" style="left:379px;top:444px;width:107px;height:26px;background:#ffe48a;border:2px solid #ffc81e"></div>
<div class="" style="left:486px;top:444px;width:1px;height:26px;background:#fff8e3"></div>
<div class="" style="left:663px;top:444px;width:1px;height:26px;background:#fff8e3"></div>
<div class="" style="left:1051px;top:444px;width:1px;height:26px;background:#fff8e3"></div>
<div class="" style="left:1122px;top:444px;width:1px;height:26px;background:#fff8e3"></div>
<div class="" style="left:1191px;top:444px;width:1px;height:26px;background:#fff8e3"></div>
<div class="" style="left:1339px;top:444px;width:1px;height:26px;background:#fff8e3"></div>
<div class="" style="left:1487px;top:444px;width:1px;height:26px;background:#fff8e3"></div>
<div class="" style="left:379px;top:471px;width:1232px;height:1px;background:#ebe8eb"></div>
<div class="t r" style="left:447.8px;top:449px;width:30px">1</div>
<svg style="left:495px;top:451px" width="16" height="12" viewBox="0 0 16 12" >
<defs><linearGradient id="sg8" x1="0" x2="1" y1="0" y2="0"><stop offset="0" stop-color="#d9469f"/><stop offset="0.14" stop-color="#d9469f"/><stop offset="0.31" stop-color="#eda6d6"/><stop offset="0.69" stop-color="#eda6d6"/><stop offset="0.86" stop-color="#d9469f"/><stop offset="1" stop-color="#d9469f"/></linearGradient></defs>
<path d="M0.8 0L0.8 1L0 2L0.8 3L0 4L0.8 5L0 6L0.8 7L0 8L0.8 9L0 10L0.8 11L0 12L16 12L15.2 11L16 10L15.2 9L16 8L15.2 7L16 6L15.2 5L16 4L15.2 3L16 2L15.2 1L16 0z" fill="url(#sg8)"/>
<rect x="0.6" y="0" width="14.8" height="1" fill="#d9469f"/><rect x="0.6" y="11" width="14.8" height="1" fill="#d9469f"/>
<rect x="1" y="2" width="4" height="1" fill="#fff" opacity="0.22"/><rect x="11" y="2" width="4" height="1" fill="#fff" opacity="0.22"/><rect x="1" y="4" width="4" height="1" fill="#fff" opacity="0.22"/><rect x="11" y="4" width="4" height="1" fill="#fff" opacity="0.22"/><rect x="1" y="6" width="4" height="1" fill="#fff" opacity="0.22"/><rect x="11" y="6" width="4" height="1" fill="#fff" opacity="0.22"/><rect x="1" y="8" width="4" height="1" fill="#fff" opacity="0.22"/><rect x="11" y="8" width="4" height="1" fill="#fff" opacity="0.22"/><rect x="5" y="1" width="6" height="10" fill="#fff"/>
<rect x="6" y="1" width="4" height="10" fill="#1d1d1d"/><rect x="7" y="2" width="1" height="1" fill="#fff" opacity="0.95"/><rect x="8" y="2" width="1" height="1" fill="#fff" opacity="0.95"/><rect x="7" y="3" width="1" height="1" fill="#fff" opacity="0.95"/><rect x="8" y="3" width="1" height="1" fill="#fff" opacity="0.95"/><rect x="6" y="4" width="1" height="1" fill="#fff" opacity="0.55"/><rect x="9" y="4" width="1" height="1" fill="#fff" opacity="0.55"/><rect x="7" y="5" width="1" height="1" fill="#fff" opacity="0.95"/><rect x="8" y="5" width="1" height="1" fill="#fff" opacity="0.95"/><rect x="7" y="6" width="1" height="1" fill="#fff" opacity="0.95"/><rect x="8" y="6" width="1" height="1" fill="#fff" opacity="0.95"/><rect x="6" y="7" width="1" height="1" fill="#fff" opacity="0.55"/><rect x="9" y="7" width="1" height="1" fill="#fff" opacity="0.55"/><rect x="7" y="8" width="1" height="1" fill="#fff" opacity="0.95"/><rect x="8" y="8" width="1" height="1" fill="#fff" opacity="0.95"/><rect x="7" y="9" width="1" height="1" fill="#fff" opacity="0.95"/><rect x="8" y="9" width="1" height="1" fill="#fff" opacity="0.95"/></svg>
<div class="t" style="left:518.49px;top:449px;letter-spacing:-0.397px;">04607112670112</div>
<div class="t" style="left:671.73px;top:449px;letter-spacing:-0.1px;">Кефир 3,2 % фас. 1 л.</div>
<div class="t gray" style="left:1060.16px;top:449px;letter-spacing:0.102px;">&lt;хара...</div>
<div class="t gray" style="left:1131.06px;top:449px;letter-spacing:0.154px;">&lt;сери...</div>
<div class="t r" style="left:1281px;top:449px;width:50px">7</div>
<div class="" style="left:379px;top:500px;width:1232px;height:1px;background:#ebe8eb"></div>
<div class="t r" style="left:447.8px;top:478px;width:30px">2</div>
<svg style="left:495px;top:480px" width="16" height="12" viewBox="0 0 16 12" >
<defs><linearGradient id="sg9" x1="0" x2="1" y1="0" y2="0"><stop offset="0" stop-color="#d9469f"/><stop offset="0.14" stop-color="#d9469f"/><stop offset="0.31" stop-color="#eda6d6"/><stop offset="0.69" stop-color="#eda6d6"/><stop offset="0.86" stop-color="#d9469f"/><stop offset="1" stop-color="#d9469f"/></linearGradient></defs>
<path d="M0.8 0L0.8 1L0 2L0.8 3L0 4L0.8 5L0 6L0.8 7L0 8L0.8 9L0 10L0.8 11L0 12L16 12L15.2 11L16 10L15.2 9L16 8L15.2 7L16 6L15.2 5L16 4L15.2 3L16 2L15.2 1L16 0z" fill="url(#sg9)"/>
<rect x="0.6" y="0" width="14.8" height="1" fill="#d9469f"/><rect x="0.6" y="11" width="14.8" height="1" fill="#d9469f"/>
<rect x="1" y="2" width="4" height="1" fill="#fff" opacity="0.22"/><rect x="11" y="2" width="4" height="1" fill="#fff" opacity="0.22"/><rect x="1" y="4" width="4" height="1" fill="#fff" opacity="0.22"/><rect x="11" y="4" width="4" height="1" fill="#fff" opacity="0.22"/><rect x="1" y="6" width="4" height="1" fill="#fff" opacity="0.22"/><rect x="11" y="6" width="4" height="1" fill="#fff" opacity="0.22"/><rect x="1" y="8" width="4" height="1" fill="#fff" opacity="0.22"/><rect x="11" y="8" width="4" height="1" fill="#fff" opacity="0.22"/><rect x="5" y="1" width="6" height="10" fill="#fff"/>
<rect x="6" y="1" width="4" height="10" fill="#1d1d1d"/><rect x="7" y="2" width="1" height="1" fill="#fff" opacity="0.95"/><rect x="8" y="2" width="1" height="1" fill="#fff" opacity="0.95"/><rect x="7" y="3" width="1" height="1" fill="#fff" opacity="0.95"/><rect x="8" y="3" width="1" height="1" fill="#fff" opacity="0.95"/><rect x="6" y="4" width="1" height="1" fill="#fff" opacity="0.55"/><rect x="9" y="4" width="1" height="1" fill="#fff" opacity="0.55"/><rect x="7" y="5" width="1" height="1" fill="#fff" opacity="0.95"/><rect x="8" y="5" width="1" height="1" fill="#fff" opacity="0.95"/><rect x="7" y="6" width="1" height="1" fill="#fff" opacity="0.95"/><rect x="8" y="6" width="1" height="1" fill="#fff" opacity="0.95"/><rect x="6" y="7" width="1" height="1" fill="#fff" opacity="0.55"/><rect x="9" y="7" width="1" height="1" fill="#fff" opacity="0.55"/><rect x="7" y="8" width="1" height="1" fill="#fff" opacity="0.95"/><rect x="8" y="8" width="1" height="1" fill="#fff" opacity="0.95"/><rect x="7" y="9" width="1" height="1" fill="#fff" opacity="0.95"/><rect x="8" y="9" width="1" height="1" fill="#fff" opacity="0.95"/></svg>
<div class="t" style="left:518.49px;top:478px;letter-spacing:-0.398px;">04607112670181</div>
<div class="t" style="left:671.73px;top:478px;letter-spacing:0.036px;">Масло "Крестьянское" фас. 0,2 кг</div>
<div class="t gray" style="left:1060.16px;top:478px;letter-spacing:0.102px;">&lt;хара...</div>
<div class="t gray" style="left:1131.06px;top:478px;letter-spacing:0.154px;">&lt;сери...</div>
<div class="t r" style="left:1281px;top:478px;width:50px">5</div>
<div class="" style="left:379px;top:529px;width:1232px;height:1px;background:#ebe8eb"></div>
<div class="t r" style="left:447.8px;top:507px;width:30px">3</div>
<svg style="left:495px;top:509px" width="16" height="12" viewBox="0 0 16 12" >
<defs><linearGradient id="sg10" x1="0" x2="1" y1="0" y2="0"><stop offset="0" stop-color="#d9469f"/><stop offset="0.14" stop-color="#d9469f"/><stop offset="0.31" stop-color="#eda6d6"/><stop offset="0.69" stop-color="#eda6d6"/><stop offset="0.86" stop-color="#d9469f"/><stop offset="1" stop-color="#d9469f"/></linearGradient></defs>
<path d="M0.8 0L0.8 1L0 2L0.8 3L0 4L0.8 5L0 6L0.8 7L0 8L0.8 9L0 10L0.8 11L0 12L16 12L15.2 11L16 10L15.2 9L16 8L15.2 7L16 6L15.2 5L16 4L15.2 3L16 2L15.2 1L16 0z" fill="url(#sg10)"/>
<rect x="0.6" y="0" width="14.8" height="1" fill="#d9469f"/><rect x="0.6" y="11" width="14.8" height="1" fill="#d9469f"/>
<rect x="1" y="2" width="4" height="1" fill="#fff" opacity="0.22"/><rect x="11" y="2" width="4" height="1" fill="#fff" opacity="0.22"/><rect x="1" y="4" width="4" height="1" fill="#fff" opacity="0.22"/><rect x="11" y="4" width="4" height="1" fill="#fff" opacity="0.22"/><rect x="1" y="6" width="4" height="1" fill="#fff" opacity="0.22"/><rect x="11" y="6" width="4" height="1" fill="#fff" opacity="0.22"/><rect x="1" y="8" width="4" height="1" fill="#fff" opacity="0.22"/><rect x="11" y="8" width="4" height="1" fill="#fff" opacity="0.22"/><rect x="5" y="1" width="6" height="10" fill="#fff"/>
<rect x="6" y="1" width="4" height="10" fill="#1d1d1d"/><rect x="7" y="2" width="1" height="1" fill="#fff" opacity="0.95"/><rect x="8" y="2" width="1" height="1" fill="#fff" opacity="0.95"/><rect x="7" y="3" width="1" height="1" fill="#fff" opacity="0.95"/><rect x="8" y="3" width="1" height="1" fill="#fff" opacity="0.95"/><rect x="6" y="4" width="1" height="1" fill="#fff" opacity="0.55"/><rect x="9" y="4" width="1" height="1" fill="#fff" opacity="0.55"/><rect x="7" y="5" width="1" height="1" fill="#fff" opacity="0.95"/><rect x="8" y="5" width="1" height="1" fill="#fff" opacity="0.95"/><rect x="7" y="6" width="1" height="1" fill="#fff" opacity="0.95"/><rect x="8" y="6" width="1" height="1" fill="#fff" opacity="0.95"/><rect x="6" y="7" width="1" height="1" fill="#fff" opacity="0.55"/><rect x="9" y="7" width="1" height="1" fill="#fff" opacity="0.55"/><rect x="7" y="8" width="1" height="1" fill="#fff" opacity="0.95"/><rect x="8" y="8" width="1" height="1" fill="#fff" opacity="0.95"/><rect x="7" y="9" width="1" height="1" fill="#fff" opacity="0.95"/><rect x="8" y="9" width="1" height="1" fill="#fff" opacity="0.95"/></svg>
<div class="t" style="left:518.49px;top:507px;letter-spacing:-0.4px;">04607112670419</div>
<div class="t" style="left:671.73px;top:507px;letter-spacing:0.036px;">Масло "Крестьянское" фас. 0,5 кг</div>
<div class="t gray" style="left:1060.16px;top:507px;letter-spacing:0.102px;">&lt;хара...</div>
<div class="t gray" style="left:1131.06px;top:507px;letter-spacing:0.154px;">&lt;сери...</div>
<div class="t r" style="left:1281px;top:507px;width:50px">15</div>
<div class="" style="left:379px;top:558px;width:1232px;height:1px;background:#ebe8eb"></div>
<div class="t r" style="left:447.8px;top:536px;width:30px">4</div>
<svg style="left:495px;top:538px" width="16" height="12" viewBox="0 0 16 12" >
<defs><linearGradient id="sg11" x1="0" x2="1" y1="0" y2="0"><stop offset="0" stop-color="#d9469f"/><stop offset="0.14" stop-color="#d9469f"/><stop offset="0.31" stop-color="#eda6d6"/><stop offset="0.69" stop-color="#eda6d6"/><stop offset="0.86" stop-color="#d9469f"/><stop offset="1" stop-color="#d9469f"/></linearGradient></defs>
<path d="M0.8 0L0.8 1L0 2L0.8 3L0 4L0.8 5L0 6L0.8 7L0 8L0.8 9L0 10L0.8 11L0 12L16 12L15.2 11L16 10L15.2 9L16 8L15.2 7L16 6L15.2 5L16 4L15.2 3L16 2L15.2 1L16 0z" fill="url(#sg11)"/>
<rect x="0.6" y="0" width="14.8" height="1" fill="#d9469f"/><rect x="0.6" y="11" width="14.8" height="1" fill="#d9469f"/>
<rect x="1" y="2" width="4" height="1" fill="#fff" opacity="0.22"/><rect x="11" y="2" width="4" height="1" fill="#fff" opacity="0.22"/><rect x="1" y="4" width="4" height="1" fill="#fff" opacity="0.22"/><rect x="11" y="4" width="4" height="1" fill="#fff" opacity="0.22"/><rect x="1" y="6" width="4" height="1" fill="#fff" opacity="0.22"/><rect x="11" y="6" width="4" height="1" fill="#fff" opacity="0.22"/><rect x="1" y="8" width="4" height="1" fill="#fff" opacity="0.22"/><rect x="11" y="8" width="4" height="1" fill="#fff" opacity="0.22"/><rect x="5" y="1" width="6" height="10" fill="#fff"/>
<rect x="6" y="1" width="4" height="10" fill="#1d1d1d"/><rect x="7" y="2" width="1" height="1" fill="#fff" opacity="0.95"/><rect x="8" y="2" width="1" height="1" fill="#fff" opacity="0.95"/><rect x="7" y="3" width="1" height="1" fill="#fff" opacity="0.95"/><rect x="8" y="3" width="1" height="1" fill="#fff" opacity="0.95"/><rect x="6" y="4" width="1" height="1" fill="#fff" opacity="0.55"/><rect x="9" y="4" width="1" height="1" fill="#fff" opacity="0.55"/><rect x="7" y="5" width="1" height="1" fill="#fff" opacity="0.95"/><rect x="8" y="5" width="1" height="1" fill="#fff" opacity="0.95"/><rect x="7" y="6" width="1" height="1" fill="#fff" opacity="0.95"/><rect x="8" y="6" width="1" height="1" fill="#fff" opacity="0.95"/><rect x="6" y="7" width="1" height="1" fill="#fff" opacity="0.55"/><rect x="9" y="7" width="1" height="1" fill="#fff" opacity="0.55"/><rect x="7" y="8" width="1" height="1" fill="#fff" opacity="0.95"/><rect x="8" y="8" width="1" height="1" fill="#fff" opacity="0.95"/><rect x="7" y="9" width="1" height="1" fill="#fff" opacity="0.95"/><rect x="8" y="9" width="1" height="1" fill="#fff" opacity="0.95"/></svg>
<div class="t" style="left:518.49px;top:536px;letter-spacing:-0.403px;">04607112670013</div>
<div class="t" style="left:671.73px;top:536px;letter-spacing:-0.024px;">Молоко 3,2 % фас. 1л.</div>
<div class="t gray" style="left:1060.16px;top:536px;letter-spacing:0.102px;">&lt;хара...</div>
<div class="t gray" style="left:1131.06px;top:536px;letter-spacing:0.154px;">&lt;сери...</div>
<div class="t r" style="left:1281px;top:536px;width:50px">3</div>
<div class="" style="left:379px;top:587px;width:1232px;height:1px;background:#ebe8eb"></div>
<div class="t r" style="left:447.8px;top:565px;width:30px">5</div>
<svg style="left:495px;top:567px" width="16" height="12" viewBox="0 0 16 12" >
<defs><linearGradient id="sg12" x1="0" x2="1" y1="0" y2="0"><stop offset="0" stop-color="#d9469f"/><stop offset="0.14" stop-color="#d9469f"/><stop offset="0.31" stop-color="#eda6d6"/><stop offset="0.69" stop-color="#eda6d6"/><stop offset="0.86" stop-color="#d9469f"/><stop offset="1" stop-color="#d9469f"/></linearGradient></defs>
<path d="M0.8 0L0.8 1L0 2L0.8 3L0 4L0.8 5L0 6L0.8 7L0 8L0.8 9L0 10L0.8 11L0 12L16 12L15.2 11L16 10L15.2 9L16 8L15.2 7L16 6L15.2 5L16 4L15.2 3L16 2L15.2 1L16 0z" fill="url(#sg12)"/>
<rect x="0.6" y="0" width="14.8" height="1" fill="#d9469f"/><rect x="0.6" y="11" width="14.8" height="1" fill="#d9469f"/>
<rect x="1" y="2" width="4" height="1" fill="#fff" opacity="0.22"/><rect x="11" y="2" width="4" height="1" fill="#fff" opacity="0.22"/><rect x="1" y="4" width="4" height="1" fill="#fff" opacity="0.22"/><rect x="11" y="4" width="4" height="1" fill="#fff" opacity="0.22"/><rect x="1" y="6" width="4" height="1" fill="#fff" opacity="0.22"/><rect x="11" y="6" width="4" height="1" fill="#fff" opacity="0.22"/><rect x="1" y="8" width="4" height="1" fill="#fff" opacity="0.22"/><rect x="11" y="8" width="4" height="1" fill="#fff" opacity="0.22"/><rect x="5" y="1" width="6" height="10" fill="#fff"/>
<rect x="6" y="1" width="4" height="10" fill="#1d1d1d"/><rect x="7" y="2" width="1" height="1" fill="#fff" opacity="0.95"/><rect x="8" y="2" width="1" height="1" fill="#fff" opacity="0.95"/><rect x="7" y="3" width="1" height="1" fill="#fff" opacity="0.95"/><rect x="8" y="3" width="1" height="1" fill="#fff" opacity="0.95"/><rect x="6" y="4" width="1" height="1" fill="#fff" opacity="0.55"/><rect x="9" y="4" width="1" height="1" fill="#fff" opacity="0.55"/><rect x="7" y="5" width="1" height="1" fill="#fff" opacity="0.95"/><rect x="8" y="5" width="1" height="1" fill="#fff" opacity="0.95"/><rect x="7" y="6" width="1" height="1" fill="#fff" opacity="0.95"/><rect x="8" y="6" width="1" height="1" fill="#fff" opacity="0.95"/><rect x="6" y="7" width="1" height="1" fill="#fff" opacity="0.55"/><rect x="9" y="7" width="1" height="1" fill="#fff" opacity="0.55"/><rect x="7" y="8" width="1" height="1" fill="#fff" opacity="0.95"/><rect x="8" y="8" width="1" height="1" fill="#fff" opacity="0.95"/><rect x="7" y="9" width="1" height="1" fill="#fff" opacity="0.95"/><rect x="8" y="9" width="1" height="1" fill="#fff" opacity="0.95"/></svg>
<div class="t" style="left:518.49px;top:565px;letter-spacing:-0.418px;">04607112670044</div>
<div class="t" style="left:671.73px;top:565px;letter-spacing:-0.061px;">Молоко топленое 4,0 % фас. 0,5 гр.</div>
<div class="t gray" style="left:1060.16px;top:565px;letter-spacing:0.102px;">&lt;хара...</div>
<div class="t gray" style="left:1131.06px;top:565px;letter-spacing:0.154px;">&lt;сери...</div>
<div class="t r" style="left:1281px;top:565px;width:50px">3</div>
<div class="" style="left:379px;top:616px;width:1232px;height:1px;background:#ebe8eb"></div>
<div class="t r" style="left:447.8px;top:594px;width:30px">6</div>
<svg style="left:495px;top:596px" width="16" height="12" viewBox="0 0 16 12" >
<defs><linearGradient id="sg13" x1="0" x2="1" y1="0" y2="0"><stop offset="0" stop-color="#d9469f"/><stop offset="0.14" stop-color="#d9469f"/><stop offset="0.31" stop-color="#eda6d6"/><stop offset="0.69" stop-color="#eda6d6"/><stop offset="0.86" stop-color="#d9469f"/><stop offset="1" stop-color="#d9469f"/></linearGradient></defs>
<path d="M0.8 0L0.8 1L0 2L0.8 3L0 4L0.8 5L0 6L0.8 7L0 8L0.8 9L0 10L0.8 11L0 12L16 12L15.2 11L16 10L15.2 9L16 8L15.2 7L16 6L15.2 5L16 4L15.2 3L16 2L15.2 1L16 0z" fill="url(#sg13)"/>
<rect x="0.6" y="0" width="14.8" height="1" fill="#d9469f"/><rect x="0.6" y="11" width="14.8" height="1" fill="#d9469f"/>
<rect x="1" y="2" width="4" height="1" fill="#fff" opacity="0.22"/><rect x="11" y="2" width="4" height="1" fill="#fff" opacity="0.22"/><rect x="1" y="4" width="4" height="1" fill="#fff" opacity="0.22"/><rect x="11" y="4" width="4" height="1" fill="#fff" opacity="0.22"/><rect x="1" y="6" width="4" height="1" fill="#fff" opacity="0.22"/><rect x="11" y="6" width="4" height="1" fill="#fff" opacity="0.22"/><rect x="1" y="8" width="4" height="1" fill="#fff" opacity="0.22"/><rect x="11" y="8" width="4" height="1" fill="#fff" opacity="0.22"/><rect x="5" y="1" width="6" height="10" fill="#fff"/>
<rect x="6" y="1" width="4" height="10" fill="#1d1d1d"/><rect x="7" y="2" width="1" height="1" fill="#fff" opacity="0.95"/><rect x="8" y="2" width="1" height="1" fill="#fff" opacity="0.95"/><rect x="7" y="3" width="1" height="1" fill="#fff" opacity="0.95"/><rect x="8" y="3" width="1" height="1" fill="#fff" opacity="0.95"/><rect x="6" y="4" width="1" height="1" fill="#fff" opacity="0.55"/><rect x="9" y="4" width="1" height="1" fill="#fff" opacity="0.55"/><rect x="7" y="5" width="1" height="1" fill="#fff" opacity="0.95"/><rect x="8" y="5" width="1" height="1" fill="#fff" opacity="0.95"/><rect x="7" y="6" width="1" height="1" fill="#fff" opacity="0.95"/><rect x="8" y="6" width="1" height="1" fill="#fff" opacity="0.95"/><rect x="6" y="7" width="1" height="1" fill="#fff" opacity="0.55"/><rect x="9" y="7" width="1" height="1" fill="#fff" opacity="0.55"/><rect x="7" y="8" width="1" height="1" fill="#fff" opacity="0.95"/><rect x="8" y="8" width="1" height="1" fill="#fff" opacity="0.95"/><rect x="7" y="9" width="1" height="1" fill="#fff" opacity="0.95"/><rect x="8" y="9" width="1" height="1" fill="#fff" opacity="0.95"/></svg>
<div class="t" style="left:518.49px;top:594px;letter-spacing:-0.403px;">04607112670303</div>
<div class="t" style="left:672.14px;top:594px;letter-spacing:-0.092px;">Сметана 20 % фас. 0,25 гр.</div>
<div class="t gray" style="left:1060.16px;top:594px;letter-spacing:0.102px;">&lt;хара...</div>
<div class="t gray" style="left:1131.06px;top:594px;letter-spacing:0.154px;">&lt;сери...</div>
<div class="t r" style="left:1281px;top:594px;width:50px">10</div>
<div class="" style="left:394px;top:634px;width:538px;height:300px;background:#fff;border:1px solid #a6a6a6;box-shadow:0 0 6px rgba(0,0,0,0.3)"></div>
<svg style="left:911px;top:645px" width="10" height="10" viewBox="0 0 10 10" ><path d="M0.500 0.500l9 9M9.5 0.500l-9 9" stroke="#444" stroke-width="1.1" fill="none"/></svg>
<svg style="left:416.8px;top:668.6px" width="63.4" height="63.4" viewBox="0 0 62 62" >
<circle cx="31" cy="31" r="29.600" fill="#fff" stroke="#4a90d9" stroke-width="2"/>
<circle cx="31" cy="13.300" r="3.300" fill="#fff" stroke="#4a90d9" stroke-width="1.800"/>
<path d="M22.500 25h8.500v25.500M22.500 50.500h17.500" fill="none" stroke="#4a90d9" stroke-width="2"/></svg>
<div class="t" style="left:500.49px;top:668px;letter-spacing:-0.291px;font-size:16px;line-height:20px;height:20px;color:#333;transform:none">Информация для технического специалиста</div>
<div class="" style="left:498px;top:692px;width:417px;height:91px;border:2px solid #f7c325;background:#fff"></div>
<div class="t" style="left:504.88px;top:699px;letter-spacing:-0.106px;">Обработка.ПроверкаИПодборПродукцииИСМП.Форма.ПроверкаИ</div>
<div class="t" style="left:504.45px;top:715px;letter-spacing:-0.293px;">Подбор</div>
<div class="" style="left:550px;top:716px;width:1px;height:15px;background:#222"></div>
<div class="ybtn" style="left:710px;top:798px;width:202px;height:25px;"></div>
<div class="t b" style="left:724.57px;top:803px;letter-spacing:0.054px;color:#363841">Открыть в Конфигураторе</div>
</div></body></html>
